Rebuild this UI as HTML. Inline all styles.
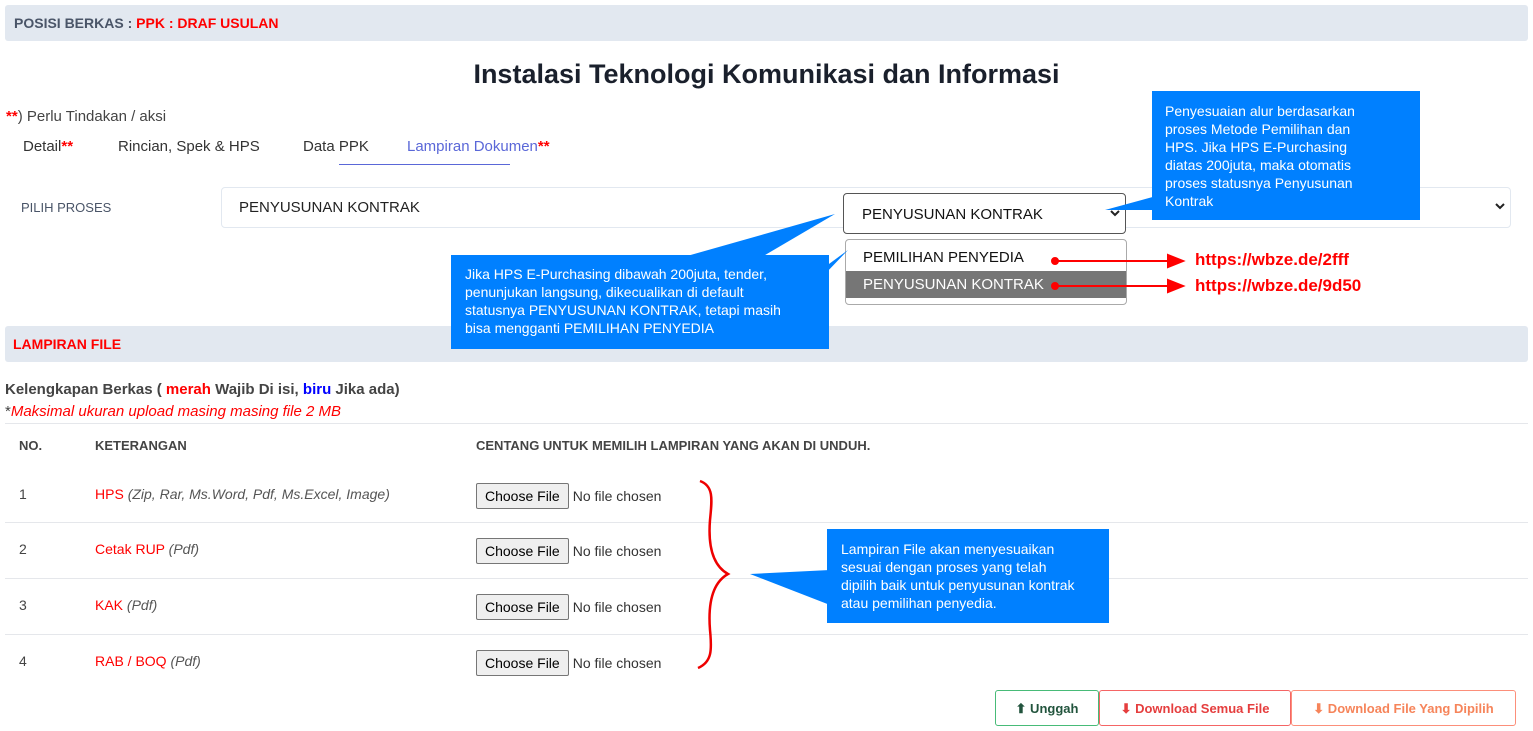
<!DOCTYPE html>
<html><head><meta charset="utf-8"><style>
body{margin:0;width:1533px;height:731px;position:relative;background:#fff;font-family:"Liberation Sans",sans-serif;color:#444;overflow:hidden}
.a{position:absolute;white-space:nowrap}
.bar{position:absolute;left:5px;width:1523px;background:#e2e8f0;border-radius:3px}
.r{color:#f00}
.cb{position:absolute;background:#0080ff;color:#fff;font-size:14px;line-height:18px;white-space:normal;z-index:5;box-sizing:border-box}
.fi{position:absolute;left:476px;font-size:14px;color:#333}
.fi span.b{display:inline-block;border:1px solid #767676;background:#efefef;border-radius:2px;padding:4px 8px;color:#000;margin-right:4px}
.btn{position:absolute;top:690px;height:36px;border:1px solid;border-radius:3px;font-size:13px;font-weight:bold;text-align:center;line-height:36px;box-sizing:border-box}
.row{position:absolute;left:5px;width:1523px;border-top:1px solid #e5e7eb}
svg{z-index:4}
</style></head><body>
<div class="bar" style="top:5px;height:36px"></div>
<div class="a" style="left:14px;top:15px;font-size:14px;font-weight:bold;color:#4a5568">POSISI BERKAS : <span class="r">PPK : DRAF USULAN</span></div>
<div class="a" style="left:0;width:1533px;text-align:center;top:59px;font-size:27px;font-weight:bold;color:#1a202c">Instalasi Teknologi Komunikasi dan Informasi</div>
<div class="a" style="left:6px;top:108px;font-size:15px;color:#444"><b class="r">**</b>) Perlu Tindakan / aksi</div>
<div class="a" style="left:23px;top:138px;font-size:15px;color:#333">Detail<b class="r">**</b></div>
<div class="a" style="left:118px;top:138px;font-size:15px;color:#333">Rincian, Spek &amp; HPS</div>
<div class="a" style="left:303px;top:138px;font-size:15px;color:#333">Data PPK</div>
<div class="a" style="left:407px;top:138px;font-size:15px;color:#5a67d8">Lampiran Dokumen<b class="r">**</b></div>
<div class="a" style="left:339px;top:164px;width:171px;height:1px;background:#5a67d8"></div>
<div class="a" style="left:21px;top:200px;font-size:13px;color:#4a5568">PILIH PROSES</div>
<div class="a" style="left:221px;top:187px;width:1288px;height:39px;border:1px solid #e2e8f0;border-radius:4px"></div>
<div class="a" style="left:239px;top:199px;font-size:15px;color:#222">PENYUSUNAN KONTRAK</div>
<div class="a" style="left:843px;top:193px;width:283px;height:41px;border:1px solid #555;border-radius:4px;background:#fff;box-sizing:border-box"></div>
<div class="a" style="left:862px;top:206px;font-size:15px;color:#111">PENYUSUNAN KONTRAK</div>
<div class="a" style="left:845px;top:239px;width:282px;height:66px;border:1px solid #aaa;border-radius:4px;background:#fff;box-sizing:border-box"></div>
<div class="a" style="left:846px;top:271px;width:280px;height:27px;background:#767676"></div>
<div class="a" style="left:863px;top:249px;font-size:15px;color:#111">PEMILIHAN PENYEDIA</div>
<div class="a" style="left:863px;top:276px;font-size:15px;color:#fff">PENYUSUNAN KONTRAK</div>
<div class="row" style="top:423px"></div>
<div class="row" style="top:522px"></div><div class="row" style="top:578px"></div><div class="row" style="top:634px"></div>
<svg class="a" style="left:0;top:0" width="1533" height="731">
<g stroke="#222" stroke-width="2" fill="none"><path d="M1111,211 l4,4 l4,-4"/><path d="M1496,204 l4,4 l4,-4"/></g>
<polygon points="1160,195 1105,210 1175,210" fill="#0080ff"/>
<polygon points="680,258 835,214 760,258" fill="#0080ff"/>
<polygon points="780,300 848,250 800,300" fill="#0080ff"/>
<polygon points="830,570 750,574 830,605" fill="#0080ff"/>
<g stroke="#f00" stroke-width="2" fill="#f00"><line x1="1055" y1="261" x2="1170" y2="261"/><line x1="1055" y1="286" x2="1170" y2="286"/>
<circle cx="1055" cy="261" r="3"/><circle cx="1055" cy="286" r="3"/>
<polygon points="1168,255 1183,261 1168,267"/><polygon points="1168,280 1183,286 1168,292"/></g>
<path d="M700,481 C714,486 712,500 710,520 C708,545 712,565 728,574 C712,583 708,605 710,630 C712,650 712,662 698,668" stroke="#e00" stroke-width="2.5" fill="none"/>
</svg>
<div class="a r" style="left:1195px;top:250px;font-size:17px;font-weight:bold">https://wbze.de/2fff</div>
<div class="a r" style="left:1195px;top:276px;font-size:17px;font-weight:bold">https://wbze.de/9d50</div>
<div class="bar" style="top:326px;height:36px"></div>
<div class="a r" style="left:13px;top:336px;font-size:14px;font-weight:bold">LAMPIRAN FILE</div>
<div class="cb" style="left:1152px;top:91px;width:268px;height:129px;padding:11px 60px 0 13px">Penyesuaian alur berdasarkan proses Metode Pemilihan dan HPS. Jika HPS E-Purchasing diatas 200juta, maka otomatis proses statusnya Penyusunan Kontrak</div>
<div class="cb" style="left:451px;top:255px;width:378px;height:94px;padding:10px 30px 0 14px">Jika HPS E-Purchasing dibawah 200juta, tender, penunjukan langsung, dikecualikan di default statusnya PENYUSUNAN KONTRAK, tetapi masih bisa mengganti PEMILIHAN PENYEDIA</div>
<div class="cb" style="left:827px;top:529px;width:282px;height:94px;padding:11px 23px 0 14px">Lampiran File akan menyesuaikan sesuai dengan proses yang telah dipilih baik untuk penyusunan kontrak atau pemilihan penyedia.</div>
<div class="a" style="left:5px;top:381px;font-size:15px;font-weight:bold;color:#444">Kelengkapan Berkas ( <span class="r">merah</span> Wajib Di isi, <span style="color:#00f">biru</span> Jika ada)</div>
<div class="a" style="left:5px;top:403px;font-size:15px;color:#444">*<i class="r">Maksimal ukuran upload masing masing file 2 MB</i></div>
<div class="a" style="left:19px;top:438px;font-size:13px;font-weight:bold;color:#444">NO.</div>
<div class="a" style="left:95px;top:438px;font-size:13px;font-weight:bold;color:#444">KETERANGAN</div>
<div class="a" style="left:476px;top:438px;font-size:13px;font-weight:bold;color:#444">CENTANG UNTUK MEMILIH LAMPIRAN YANG AKAN DI UNDUH.</div>
<div class="a" style="left:19px;top:486px;font-size:14px">1</div>
<div class="a" style="left:95px;top:486px;font-size:14px"><span class="r">HPS</span> <i style="color:#555">(Zip, Rar, Ms.Word, Pdf, Ms.Excel, Image)</i></div>
<div class="a" style="left:19px;top:541px;font-size:14px">2</div>
<div class="a" style="left:95px;top:541px;font-size:14px"><span class="r">Cetak RUP</span> <i style="color:#555">(Pdf)</i></div>
<div class="a" style="left:19px;top:597px;font-size:14px">3</div>
<div class="a" style="left:95px;top:597px;font-size:14px"><span class="r">KAK</span> <i style="color:#555">(Pdf)</i></div>
<div class="a" style="left:19px;top:653px;font-size:14px">4</div>
<div class="a" style="left:95px;top:653px;font-size:14px"><span class="r">RAB / BOQ</span> <i style="color:#555">(Pdf)</i></div>
<div class="fi" style="top:483px"><span class="b">Choose File</span>No file chosen</div>
<div class="fi" style="top:538px"><span class="b">Choose File</span>No file chosen</div>
<div class="fi" style="top:594px"><span class="b">Choose File</span>No file chosen</div>
<div class="fi" style="top:650px"><span class="b">Choose File</span>No file chosen</div>
<div class="btn" style="left:995px;width:104px;border-color:#48bb78;color:#22543d">⬆ Unggah</div>
<div class="btn" style="left:1099px;width:192px;border-color:#f56565;color:#e53e3e">⬇ Download Semua File</div>
<div class="btn" style="left:1291px;width:225px;border-color:#fc8f7a;color:#f6845a">⬇ Download File Yang Dipilih</div>
</body></html>
